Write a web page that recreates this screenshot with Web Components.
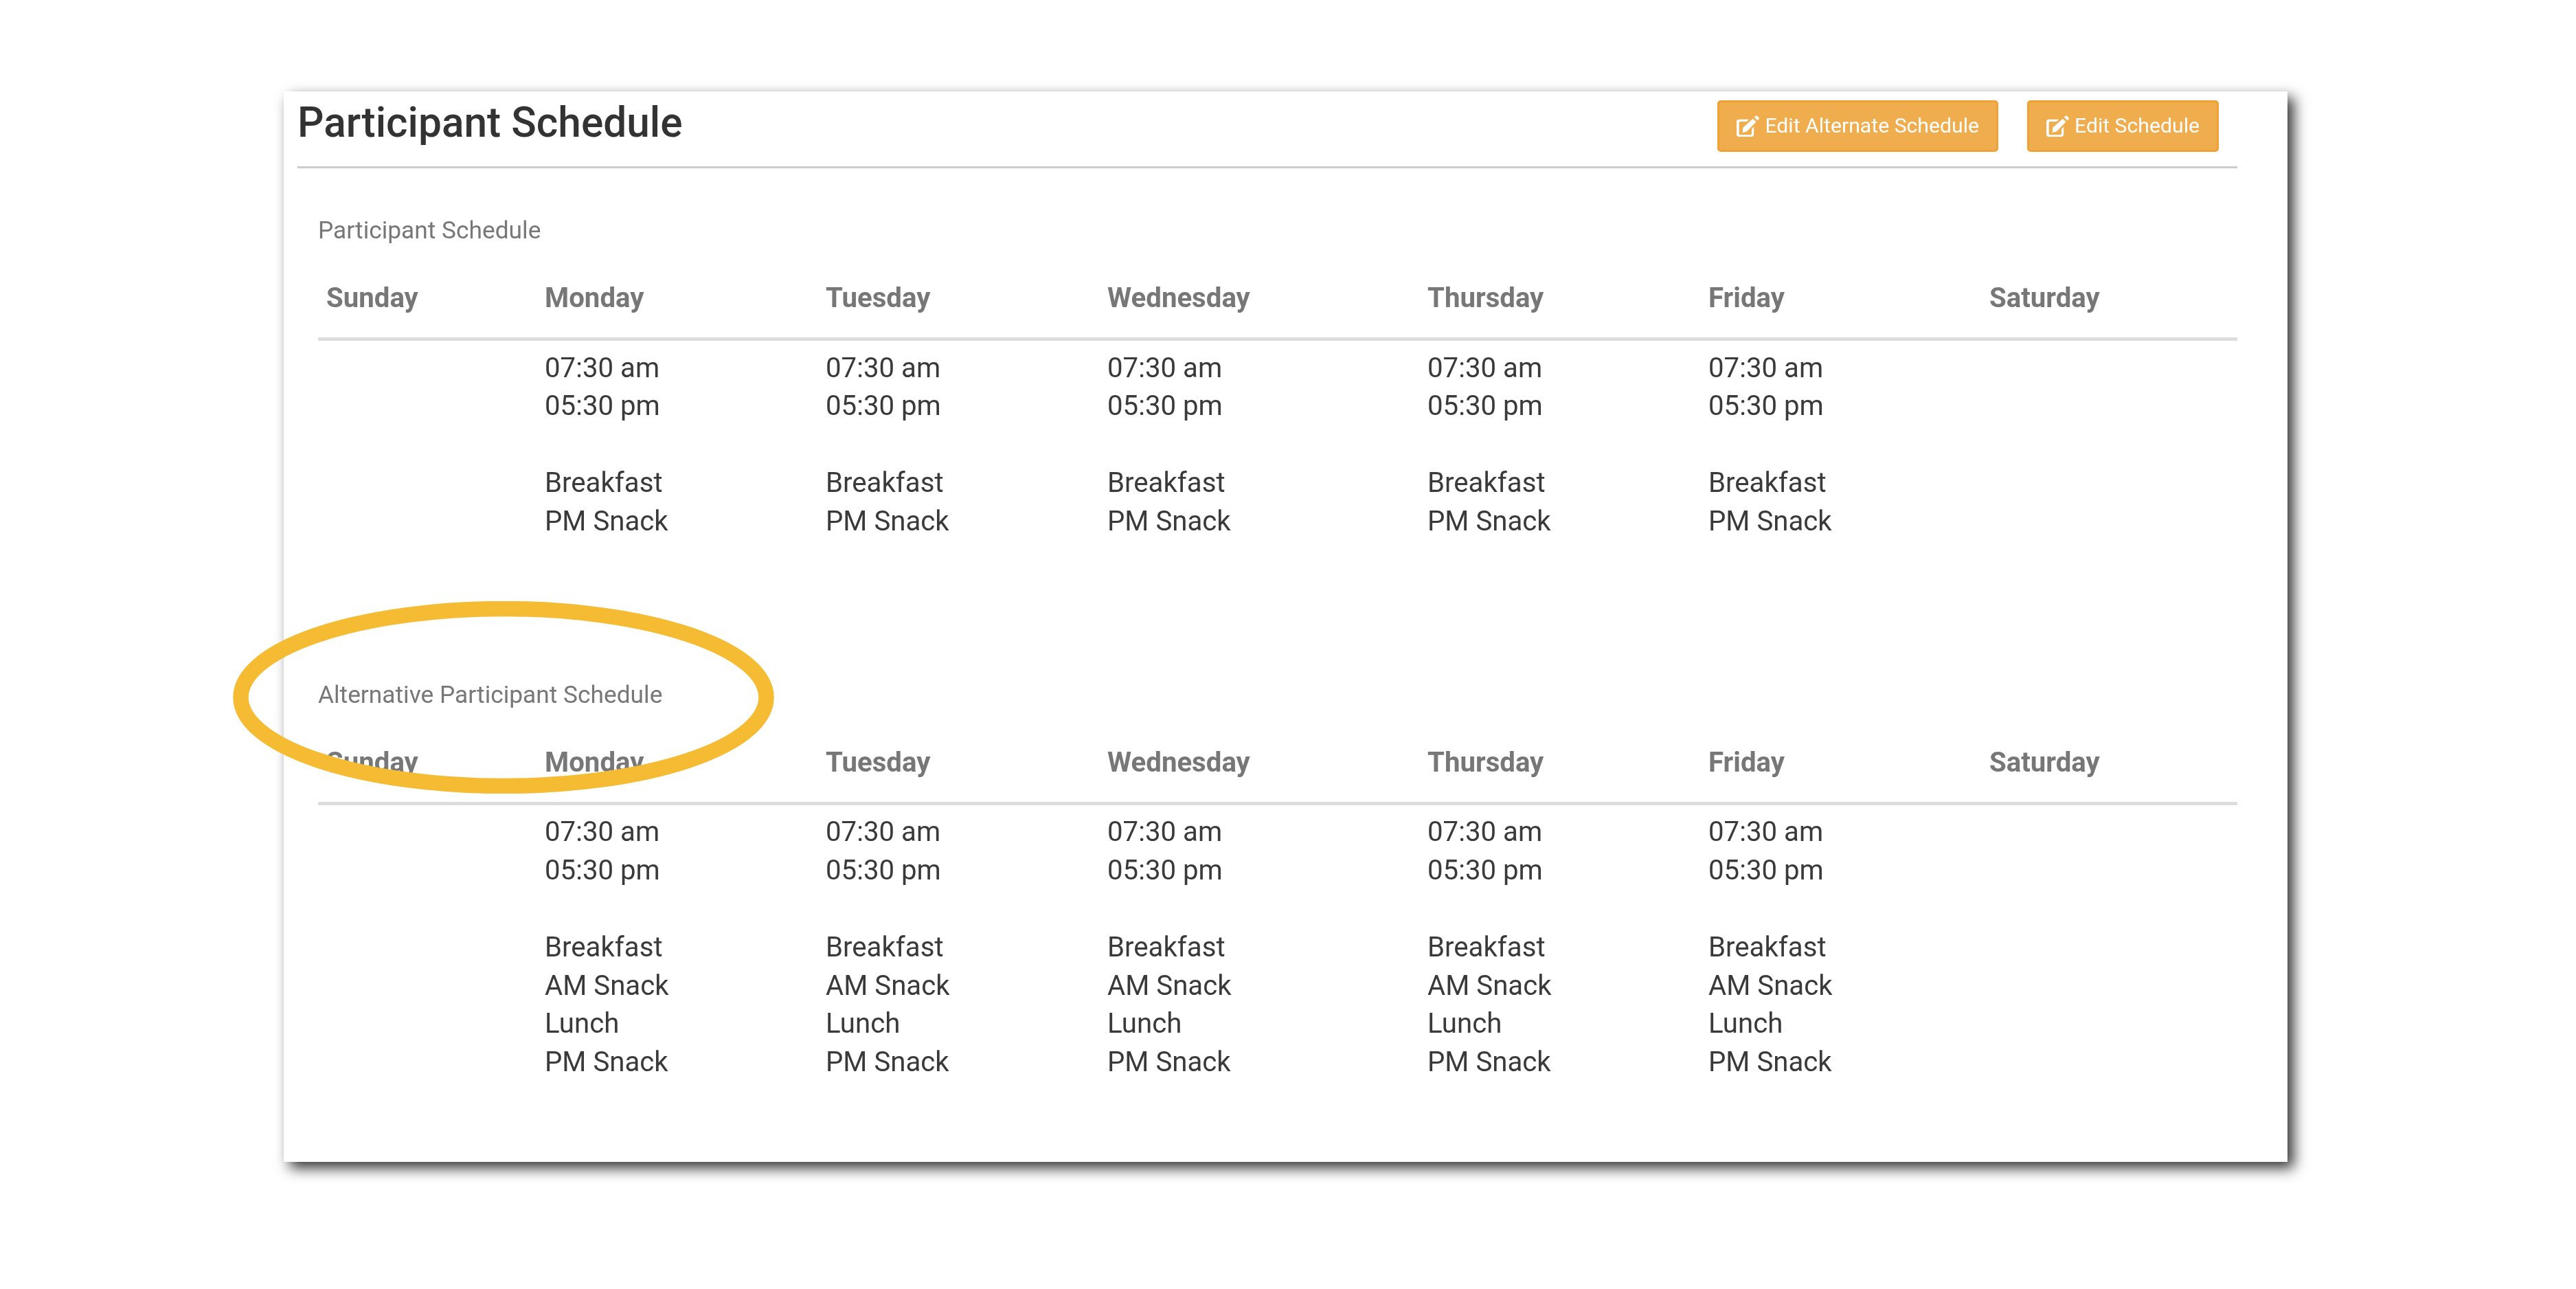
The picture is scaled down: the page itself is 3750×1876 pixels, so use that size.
<!DOCTYPE html>
<html><head><meta charset="utf-8">
<style>
html,body{margin:0;background:#fff}
body{font-family:Roboto,"Liberation Sans",sans-serif;width:3750px;height:1876px;overflow:hidden}
</style></head>
<body>
<schedule-page>
  <page-header slot="header" title="Participant Schedule">
    <edit-button>Edit Alternate Schedule</edit-button>
    <edit-button>Edit Schedule</edit-button>
  </page-header>
  <schedule-section label="Participant Schedule" meals="Breakfast|PM Snack" style="--top:70px;--after:102.500px"></schedule-section>
  <schedule-section label="Alternative Participant Schedule" meals="Breakfast|AM Snack|Lunch|PM Snack"></schedule-section>
  <ring-mark></ring-mark>
</schedule-page>
<script>
function def(name, css, html){
  customElements.define(name, class extends HTMLElement{
    connectedCallback(){
      if(this.shadowRoot) return;
      const r=this.attachShadow({mode:'open'});
      r.innerHTML='<style>'+css+'</style>'+(typeof html==='function'?html(this):html);
    }
  });
}
def('schedule-page',`
:host{display:block;position:relative;box-sizing:border-box;margin:133px 0 0 413px;width:2917px;height:1558px;background:#fff;padding:0 73px 0 20px;box-shadow:9px 9px 19px rgba(0,0,0,.8)}
`,`<slot name="header"></slot><slot></slot>`);
def('page-header',`
:host{display:flex;justify-content:space-between;box-sizing:border-box;height:112px;border-bottom:3px solid #ccc}
h1{margin:0;font:500 60.4px/1 Roboto,sans-serif;color:#333;padding-top:16px;height:60px;white-space:nowrap;filter:blur(.5px)}
.b{display:flex;gap:42px;padding:13px 27px 0 0}
`,h=>`<h1>${h.getAttribute('title')}</h1><div class="b"><slot></slot></div>`);
def('edit-button',`
:host{display:flex;align-items:center;box-sizing:border-box;height:75px;padding:0 25px;gap:8px;background:#f0ad4e;border:3px solid #eea236;border-radius:5px;color:#fff;font:400 30.2px/1 Roboto,sans-serif;white-space:nowrap}
svg{width:33px;height:32px;flex:none}
span{filter:blur(.5px)}
`,`<svg viewBox="0 0 36 34" preserveAspectRatio="none"><path d="M6 6h14l-4 3.500H6a2 2 0 0 0-2 2V28a2 2 0 0 0 2 2h16a2 2 0 0 0 2-2v-7l3.500-3.500V29a4 4 0 0 1-4 4H4a4 4 0 0 1-4-4V9a4 4 0 0 1 4-3z" fill="#fff"/><path d="M10 19 26 5l5 5-15 15-6.500 1.500z" fill="#fff"/><path d="M28 2.500l2-1.500a2 2 0 0 1 3 0l2 2a2 2 0 0 1 0 3l-1.500 2z" fill="#fff"/></svg><span><slot></slot></span>`);
const days=['Sunday','Monday','Tuesday','Wednesday','Thursday','Friday','Saturday'];
def('schedule-section',`
:host{display:block;box-sizing:border-box;padding:var(--top,102px) 0 var(--after,0) 30px;font-family:Roboto,sans-serif}
.l{font-size:35.300px;line-height:40px;height:40px;color:#777;filter:blur(.5px)}
.g{display:grid;grid-template-columns:318px 409px 410px 466px 409px 409px 373px;margin-top:56px}
.h{font-size:40.200px;font-weight:700;color:#777;line-height:45px;padding:0 12px 35px;border-bottom:5px solid #ddd}
.c{font-size:40.200px;color:#3a3a3a;line-height:55.800px;padding:11.500px 12px 0;white-space:nowrap}
.c span{display:block}
.s{height:55.800px}
.h span,.c span{filter:blur(.5px)}
`,h=>{
  const m=h.getAttribute('meals').split('|');
  const cell=i=>(i===0||i===6)?'<div class="c"></div>':`<div class="c"><span>07:30 am</span><span>05:30 pm</span><span class="s"></span>${m.map(x=>`<span>${x}</span>`).join('')}</div>`;
  return `<div class="l">${h.getAttribute('label')}</div><div class="g">${days.map(d=>`<div class="h"><span>${d}</span></div>`).join('')}${days.map((d,i)=>cell(i)).join('')}</div>`;
});
def('ring-mark',`
:host{position:absolute;left:-74px;top:742px;width:788px;height:280px;display:block}
svg{display:block}
`,`<svg width="788" height="280" viewBox="0 0 788 280"><ellipse cx="394" cy="140" rx="382.500" ry="129" fill="none" stroke="#f5bb33" stroke-width="22.500"/></svg>`);
</script>
</body></html>
